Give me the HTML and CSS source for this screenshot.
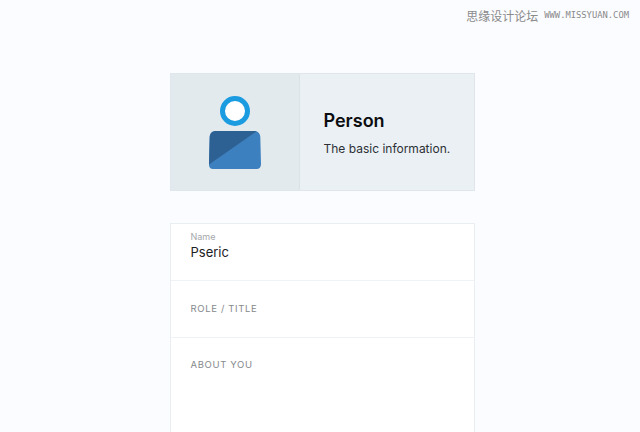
FILE: index.html
```html
<!DOCTYPE html>
<html lang="en">
<head>
<meta charset="utf-8">
<title>Person</title>
<link rel="stylesheet" href="styles.css">
</head>
<body>
<div class="watermark"><span class="wm-cn">思缘设计论坛</span><span class="wm-en">WWW.MISSYUAN.COM</span></div>
<main class="page">
  <section class="header-card">
    <div class="icon-cell">
      <svg class="person-icon" width="54" height="74" viewBox="0 0 54 74" aria-hidden="true">
        <circle cx="27" cy="15" r="12.5" fill="#fff" stroke="#1b9be0" stroke-width="5"/>
        <path d="M8 35H46C49.500 35 52 37 52.300 41L53 68C53 71 51.500 73 48.500 73H5C2.500 73 1 71.500 1 68.500L1.700 41C2 37 4.500 35 8 35Z" fill="#3d80bf"/>
        <path d="M8 35H49L1 68.500L1.700 41C2 37 4.500 35 8 35Z" fill="#2e6193"/>
      </svg>
    </div>
    <div class="info-cell">
      <h1 class="title">Person</h1>
      <p class="desc">The basic information.</p>
    </div>
  </section>
  <form class="form-card">
    <div class="row row-name">
      <div class="small-label">Name</div>
      <div class="value">Pseric</div>
    </div>
    <div class="row row-role"><span class="caps-label">ROLE / TITLE</span></div>
    <div class="row row-about"><span class="caps-label">ABOUT YOU</span></div>
  </form>
</main>
</body>
</html>
```
FILE: styles.css
```css
* { box-sizing: border-box; }
html, body { margin: 0; height: 432px; overflow: hidden; }
body { background: #fbfcff; font-family: Inter, "Liberation Sans", sans-serif; position: relative; }
.page { width: 305px; margin-left: 170px; padding-top: 73px; }
.header-card { display: flex; height: 118px; background: #ebf0f4; border: 1px solid #dfe7ec; }
.icon-cell { width: 129px; flex: none; display: flex; align-items: center; justify-content: center; background: #e3eaee; border-right: 1px solid #d9e3e8; padding-top: 2px; }
.person-icon { display: block; }
.info-cell { padding: 36px 0 0 23.500px; }
.title { margin: 0; font-size: 18px; line-height: 22px; font-weight: 600; color: #0b0d10; letter-spacing: 0; }
.desc { margin: 9px 0 0; font-size: 12px; line-height: 16px; color: #2b3035; }
.form-card { margin-top: 32px; height: 209px; background: #fff; border: 1px solid #e8eef2; border-bottom: 0; }
.row { padding: 0 19.500px; border-bottom: 1px solid #f0f3f5; }
.row-name { height: 57px; padding-top: 7px; }
.row-role { height: 57px; padding-top: 21px; }
.row-about { border-bottom: 0; padding-top: 20px; }
.small-label { font-size: 9px; line-height: 11px; color: #a4a8ab; }
.value { font-size: 13px; line-height: 17px; color: #1c2024; margin-top: 1.500px; }
.caps-label { display: block; font-size: 9.500px; line-height: 14px; letter-spacing: 0.650px; color: #85898c; }
.watermark { position: absolute; top: 8px; right: 11px; display: flex; align-items: center; gap: 6px; color: #8a8a8a; }
.wm-cn { font-family: "Noto Sans CJK SC", sans-serif; font-size: 12px; line-height: 15px; }
.wm-en { font-family: "DejaVu Sans Mono", monospace; font-size: 8.800px; line-height: 15px; }
```
